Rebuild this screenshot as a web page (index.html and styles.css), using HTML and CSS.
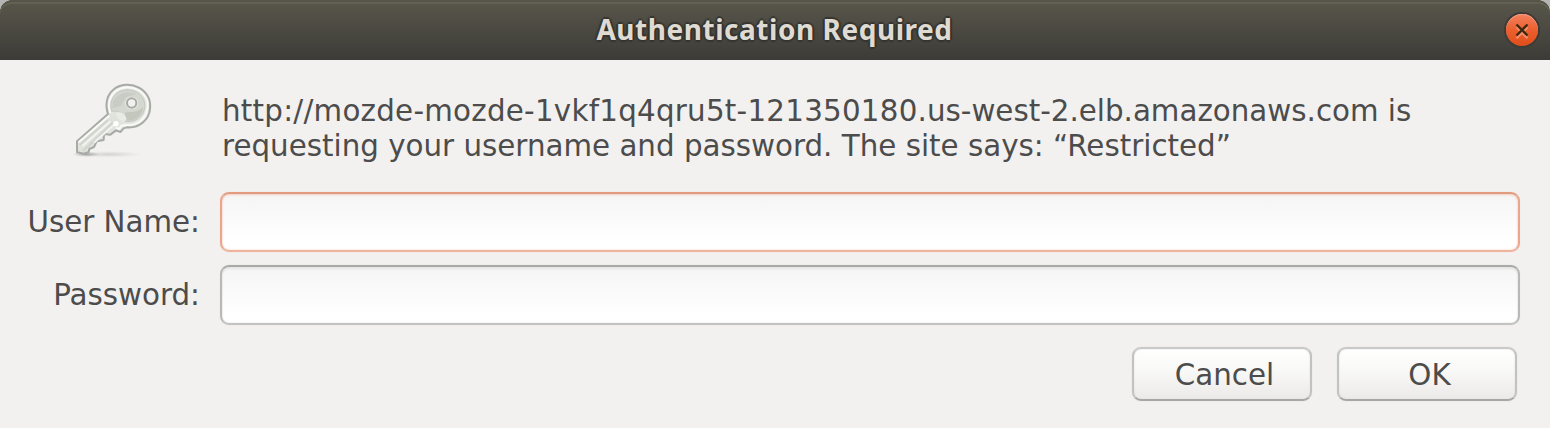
FILE: index.html
```
<!DOCTYPE html>
<html lang="en">
<head>
<meta charset="utf-8">
<title>Authentication Required</title>
<link rel="stylesheet" href="styles.css">
</head>
<body>
<main class="dialog">
  <header class="titlebar">
    <h1 class="title">Authentication Required</h1>
    <button class="close" aria-label="Close">
      <svg viewBox="0 0 32 32" width="32" height="32"><path class="cross-light" d="M10.500 13.300l11 11m0-11l-11 11"/><path class="cross" d="M10.500 10.500l11 11m0-11l-11 11"/></svg>
    </button>
  </header>
  <form class="content">
    <div class="message-row">
      <svg class="key" viewBox="0 0 330 300" width="110" height="100" aria-hidden="true">
        <defs>
          <linearGradient id="metal" x1="0" y1="0" x2="1" y2="1"><stop offset="0" stop-color="#f5f6f3"/><stop offset=".5" stop-color="#dfe1db"/><stop offset="1" stop-color="#eceeea"/></linearGradient>
          <linearGradient id="face" x1="0" y1="0" x2="1" y2="1"><stop offset="0" stop-color="#d2d5cd"/><stop offset="1" stop-color="#d6d9d1"/></linearGradient>
          <radialGradient id="shadow"><stop offset="0" stop-color="#555" stop-opacity=".5"/><stop offset="1" stop-color="#777" stop-opacity="0"/></radialGradient>
          <filter id="soft" x="-10%" y="-10%" width="120%" height="120%"><feGaussianBlur stdDeviation="2"/></filter>
        </defs>
        <ellipse cx="82" cy="250" rx="42" ry="8" fill="url(#shadow)"/>
        <ellipse cx="150" cy="250" rx="100" ry="10" fill="url(#shadow)" opacity=".4"/>
        <g filter="url(#soft)" stroke-linejoin="round">
          <path d="M54 211 147 129C138 102 142 73 163 56 184 38 216 37 240 50 264 64 276 87 273 114 270 148 240 172 204 169L194 172 184 183 171 178 154 191 135 189 134 207 113 211 105 228 91 234 89 243 75 248 54 244Z" fill="url(#metal)" stroke="#a8aaa5" stroke-width="6"/>
          <path d="M59 214 151 134M154 126C146 101 151 79 166 64 184 47 214 44 237 57 260 70 269 91 265 114 260 145 234 165 201 162L187 164 181 174 170 170" fill="none" stroke="#f9faf7" stroke-width="6"/>
          <path d="M158 121C151 97 159 77 175 65 195 52 221 54 240 68 258 83 262 106 252 126 241 147 220 154 198 151 199 132 183 117 158 121Z" fill="url(#face)" stroke="#c5c8c0" stroke-width="3"/>
          <path d="M198 148C224 153 251 138 252 108 238 124 218 123 198 124Z" fill="#c3c7bd"/>
          <path d="M162 91C176 67 205 58 233 69L202 78 185 105 160 111Z" fill="#c9ccc4"/>
          <path d="M147 147 62 222M162 155 72 240" fill="none" stroke="#d2d5ce" stroke-width="7"/>
          <path d="M154 151 70 225M168 158 105 215" fill="none" stroke="#f3f4f1" stroke-width="6"/>
          <ellipse cx="187" cy="137" rx="18" ry="10" transform="rotate(38 187 137)" fill="#e8eae4"/>
          <circle cx="171" cy="158" r="8" fill="#fff"/>
          <circle cx="218" cy="96" r="19" fill="#eef0eb"/>
          <circle cx="218" cy="96" r="14" fill="#f2f1f0" stroke="#a7aaa3" stroke-width="6"/>
        </g>
      </svg>
      <p class="message"><span class="host">http://mozde-mozde-1vkf1q4qru5t-121350180</span>.us-west-2.elb.amazonaws.com is<br>requesting your username and password. The site says: “Restricted”</p>
    </div>
    <div class="fields">
      <label for="user">User Name:</label><input class="entry focused" id="user" type="text">
      <label for="pass">Password:</label><input class="entry" id="pass" type="password">
    </div>
    <div class="actions">
      <button class="button" type="button">Cancel</button>
      <button class="button" type="button">OK</button>
    </div>
  </form>
</main>
</body>
</html>
```
FILE: styles.css
```
* { box-sizing: border-box; }
body { margin: 0; background: #b5b5b3; }
.dialog {
  width: 1550px;
  height: 428px;
  overflow: hidden;
  border-radius: 12px 12px 0 0;
  background: #f2f1f0;
  color: #4c4c4c;
  font: 29.333px/35px "DejaVu Sans", sans-serif;
}
.titlebar {
  display: grid;
  grid-template-columns: 60px 1fr 60px;
  align-items: center;
  height: 60px;
  border-radius: 12px 12px 0 0;
  background: linear-gradient(#59574b, #3c3b37);
  box-shadow: inset 0 2px #57554a, inset 0 4px #636151;
}
.title {
  grid-column: 2;
  margin: 0 1px 2px 0;
  text-align: center;
  color: #dfdbd2;
  font: bold 28px/40px "Noto Sans", sans-serif;
  letter-spacing: .54px;
  text-shadow: 0 -2px 1px #35342f, 0 2px 1px #35342f, 2px 0 1px #35342f, -2px 0 1px #35342f;
}
.close {
  justify-self: center;
  width: 32px;
  height: 32px;
  margin-left: 4px;
  padding: 0;
  border: 0;
  border-radius: 50%;
  background: linear-gradient(#f48160, #ec5f2d 50%, #df4e1b);
  box-shadow: 0 0 0 2px #3d3b37, inset 0 1px #f59b80;
}
.close svg { display: block; }
.cross, .cross-light { fill: none; stroke: #3d2910; stroke-width: 2.3; }
.cross-light { stroke: #f58e6b; }
.content { display: flex; flex-direction: column; }
.message-row { display: flex; height: 132px; padding: 11px 0 0 59px; }
.key { flex: none; }
.message { margin: 23px 0 0 53px; white-space: nowrap; }
.host { letter-spacing: .25px; }
.fields {
  display: grid;
  grid-template-columns: 200px 1300px;
  column-gap: 20px;
  row-gap: 13px;
  align-items: center;
}
.fields label { text-align: right; }
.entry {
  width: 1300px;
  height: 60px;
  padding: 0 12px;
  border: 2px solid;
  border-color: #a9a9a8 #b8b8b7 #c3c3c2;
  border-radius: 9px;
  background: linear-gradient(#f5f5f5, #fff 85%);
  box-shadow: inset 0 2px 2px #e5e5e5, inset 0 0 2px #ddd, 0 0 1px #d5d5d4;
  font: inherit;
}
.focused {
  border-color: #e39b7f #eaa58c #efb49e;
  box-shadow: inset 0 1px 2px #f1d3c7, inset 0 0 2px #f5c9b9, 0 0 1px #f0c9bb;
}
.actions { display: flex; justify-content: flex-end; gap: 25px; padding: 22px 33px 0 0; }
.button {
  width: 180px;
  height: 54px;
  padding: 2px 0 0 5px;
  border: 2px solid;
  border-color: #c9c9c8 #c2c2c1 #a7a7a6;
  border-radius: 9px;
  background: linear-gradient(#fff, #f7f7f6 50%, #ebeae9);
  box-shadow: inset 0 0 2px #dedede, 0 0 1px #c9c9c8;
  color: inherit;
  font: inherit;
}
```
